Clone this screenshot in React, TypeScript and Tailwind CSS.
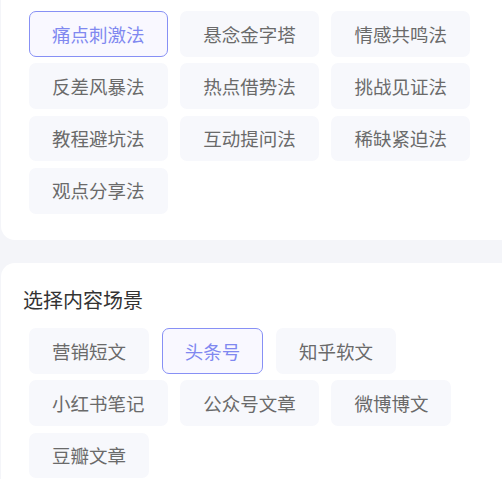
import React from "react";

const methods = [
  "痛点刺激法",
  "悬念金字塔",
  "情感共鸣法",
  "反差风暴法",
  "热点借势法",
  "挑战见证法",
  "教程避坑法",
  "互动提问法",
  "稀缺紧迫法",
  "观点分享法",
];

const scenes = ["营销短文", "头条号", "知乎软文", "小红书笔记", "公众号文章", "微博博文", "豆瓣文章"];

function Chip({ label, active }: { label: string; active?: boolean }) {
  return (
    <div
      className={
        "h-[45.7px] px-[22px] flex items-center justify-center rounded-[7px] border text-[18.5px] leading-none whitespace-nowrap " +
        (active
          ? "border-[#8790f5] bg-[#f9f8ff] text-[#8088f0]"
          : "border-transparent bg-[#f7f8fc] text-[#6a6a6a]")
      }
    >
      {label}
    </div>
  );
}

export default function App() {
  return (
    <div className="w-[502px] h-[479px] overflow-hidden bg-[#f4f5f9] font-['Noto_Sans_CJK_SC',sans-serif]">
      <div className="-mt-[20px] ml-[1px] w-[514px] bg-white rounded-[14px] pt-[31px] pb-[26.3px] pl-[28px]">
        <div className="flex flex-wrap gap-x-[12.7px] gap-y-[6.6px] w-[450px]">
          {methods.map((m, i) => (
            <Chip key={m} label={m} active={i === 0} />
          ))}
        </div>
      </div>
      <div className="mt-[23px] ml-[1px] w-[514px] bg-white rounded-[14px] pt-[23px] pb-[30px]">
        <div className="pl-[22px] text-[20px] leading-[28px] text-[#333333]">选择内容场景</div>
        <div className="mt-[14.3px] pl-[28px] flex flex-wrap gap-x-[12.7px] gap-y-[6.6px] w-[478px]">
          {scenes.map((s, i) => (
            <Chip key={s} label={s} active={i === 1} />
          ))}
        </div>
      </div>
    </div>
  );
}
